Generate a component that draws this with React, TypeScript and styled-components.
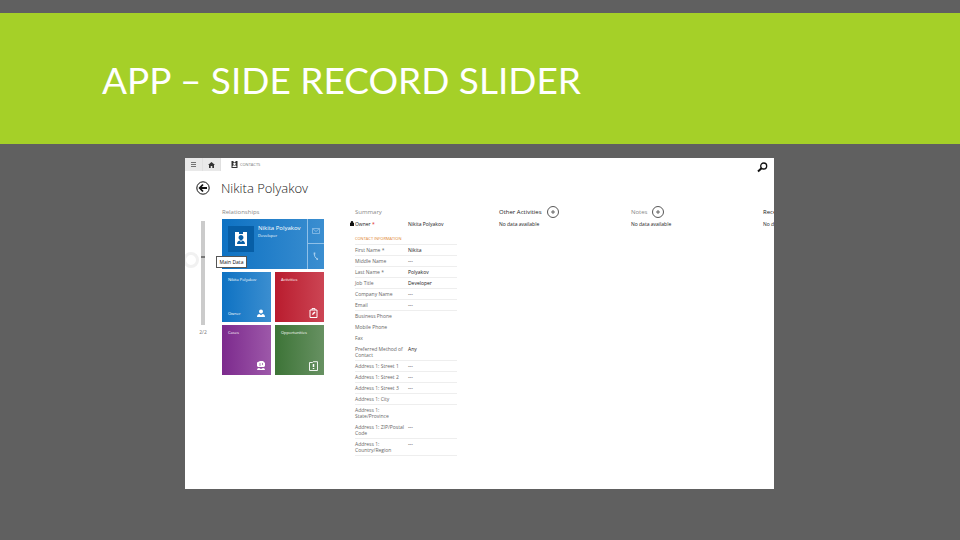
import React from "react";
import styled, { createGlobalStyle } from "styled-components";

const Global = createGlobalStyle`
  * { box-sizing: border-box; }
  html, body, #root { height: 100%; }
  body { margin: 0; background: #606060; font-family: "Open Sans", "Noto Sans", sans-serif; }
  h1, h2, h3, p, dl, dd { margin: 0; font-weight: 400; }
  button { border: 0; padding: 0; background: none; color: inherit; font: inherit; cursor: pointer; }
  svg { display: block; }
`;

const Slide = styled.main`
  min-height: 100%;
  padding-top: 13px;
  display: flex;
  flex-direction: column;
  gap: 14px;
`;

const Banner = styled.header`
  height: 131px;
  flex: none;
  padding: 2px 102px 0;
  display: flex;
  align-items: center;
  background: #a5d028;
  color: #fff;
`;

const Title = styled.h1`
  font: 400 37px/44px Lato, "Open Sans", sans-serif;
  white-space: nowrap;
`;

const Shot = styled.section`
  margin: 0 19.375% 51px 19.27%;
  flex: 1;
  background: #fff;
  color: #333;
  overflow: hidden;
`;

const NavBar = styled.nav`
  height: 13px;
  display: flex;
  align-items: center;
  justify-content: space-between;
`;

const NavGroup = styled.div`
  display: flex;
  align-items: center;
  height: 100%;
`;

const NavButton = styled.button`
  width: 18px;
  height: 13px;
  display: grid;
  place-items: center;
  background: #e9e9e9;
  border-right: 1px solid #e0e0e0;
`;

const Crumb = styled.a`
  margin-left: 10px;
  display: flex;
  align-items: center;
  gap: 2px;
  color: #777;
  font-size: 4px;
  line-height: 8px;
  text-decoration: none;

  svg { color: #333; }
`;

const SearchButton = styled.button`
  margin: 5px 6px 0 0;
`;

const RecordHead = styled.header`
  height: 35px;
  padding: 0 0 2px 11px;
  display: flex;
  align-items: center;
  gap: 11px;
`;

const RecordName = styled.h2`
  font: 300 13px/18px "Open Sans", sans-serif;
  color: #222;
`;

const Columns = styled.div`
  display: grid;
  grid-template-columns: 37px 127px 150px 132px 132px 80px;
  align-items: start;
`;

const Rail = styled.div`
  padding: 15px 1px 0 0;
  display: flex;
  flex-direction: column;
  align-items: center;
  gap: 3px;
  color: #777;
  font-size: 5px;
  line-height: 8px;
`;

const Track = styled.div`
  position: relative;
  width: 4px;
  height: 104px;
  background: #cbcbcb;
`;

const Mark = styled.span`
  position: absolute;
  top: 35px;
  left: 0;
  width: 4px;
  height: 2px;
  background: #777;
`;

const Knob = styled.button`
  position: absolute;
  top: 31px;
  right: 6px;
  width: 16px;
  height: 16px;
  border: 3px solid #f1f1f1;
  border-radius: 50%;
`;

const Heading = styled.h3<{ $strong?: boolean }>`
  font-size: 6px;
  line-height: 12px;
  color: ${(p) => (p.$strong ? "#222" : "#888")};
`;

const Tiles = styled.div`
  position: relative;
  margin-top: 1px;
  width: 102px;
  display: grid;
  grid-template-columns: 1fr 1fr;
  grid-template-rows: 50px 50px 50px;
  gap: 3px 4px;
`;

const Card = styled.article`
  grid-column: span 2;
  display: grid;
  grid-template-columns: 1fr 17px;
  background: linear-gradient(90deg, #0e72c3, #3b8ed0);
  color: #fff;
`;

const CardBody = styled.div`
  padding: 5px 6px;
  display: flex;
  gap: 4px;
`;

const Portrait = styled.div`
  width: 26px;
  height: 26px;
  margin-top: 2px;
  display: grid;
  place-items: center;
  background: #075ea6;
`;

const CardName = styled.h3`
  font-size: 6px;
  line-height: 8px;
  white-space: nowrap;
`;

const CardRole = styled.p`
  font-size: 4px;
  line-height: 8px;
`;

const CardActions = styled.div`
  display: grid;
  border-left: 1px solid #8fc0e8;

  button {
    display: grid;
    place-items: center;
  }
  button + button {
    border-top: 1px solid #8fc0e8;
  }
`;

const Tile = styled.button<{ $from: string; $to: string }>`
  padding: 4px 6px;
  display: grid;
  grid-template-columns: 1fr auto;
  align-content: space-between;
  align-items: end;
  background: linear-gradient(90deg, ${(p) => p.$from}, ${(p) => p.$to});
  color: #fff;
  font-size: 4px;
  line-height: 8px;
  text-align: left;

  span:first-child { grid-column: span 2; }
`;

const Tooltip = styled.div`
  position: absolute;
  top: 37px;
  left: -6px;
  height: 12px;
  width: 31px;
  display: grid;
  place-items: center;
  border: 1px solid #555;
  background: #fff;
  color: #111;
  font-size: 5px;
  line-height: 8px;
  white-space: nowrap;
`;

const Summary = styled.section`
  padding-left: 6px;
  width: 108px;
`;

const Fields = styled.dl`
  font-size: 5px;
`;

const Field = styled.div<{ $plain?: boolean }>`
  padding: 2px 0;
  display: grid;
  grid-template-columns: 53px 1fr;
  line-height: 6px;
  color: #666;
  border-bottom: 1px solid ${(p) => (p.$plain ? "transparent" : "#eee")};

  dd { color: #222; }
`;

const Owner = styled(Field)`
  margin-top: 1px;
  position: relative;
  color: #222;

  svg {
    position: absolute;
    left: -5px;
    top: 2px;
  }
`;

const Required = styled.span`
  color: #d22;
`;

const GroupTitle = styled.h3`
  margin-top: 4px;
  color: #e0822d;
  font-size: 4px;
  line-height: 10px;
  border-bottom: 1px solid #eee;
`;

const ListHead = styled.header`
  height: 12px;
  display: flex;
  align-items: center;
  gap: 5px;
  white-space: nowrap;
`;

const Empty = styled.p`
  margin-top: 3px;
  color: #222;
  font-size: 5px;
  line-height: 7px;
  white-space: nowrap;
`;

const ContactIcon = ({ size }: { size: number }) => (
  <svg width={size} height={size} viewBox="0 0 14 14" fill="currentColor">
    <path fillRule="evenodd" d="M1 0h4v2h4V0h4v14H1zM7 3a2.5 2.5 0 0 0-1.5 4.5L7 9l1.500-1.500A2.500 2.500 0 0 0 7 3M3 12h8c0-2-1-3-2.500-3.500L7 10 5.500 8.500C4 9 3 10 3 12" />
  </svg>
);

const AddIcon = () => (
  <svg width="12" height="12" viewBox="0 0 12 12" fill="none" stroke="#444">
    <circle cx="6" cy="6" r="5.500" strokeWidth=".9" />
    <path d="M6 4v4M4 6h4" strokeWidth=".8" />
  </svg>
);

const PersonIcon = () => (
  <svg width="8" height="9" viewBox="0 0 8 9" fill="currentColor">
    <circle cx="4" cy="2.500" r="2" />
    <path d="M0 8c0-2 1-3 2.500-3L4 6.200 5.500 5C7 5 8 6 8 8z" />
  </svg>
);

const CaseIcon = () => (
  <svg width="8" height="10" viewBox="0 0 8 10" fill="currentColor">
    <path d="M0 2q0-1 1-1l2-1h3l1 1 1 1v3l-1 1H1L0 5zM0 9q0-2 2-2l2 1 2-1q2 0 2 2z" />
    <path d="M3 2v3M5.500 2v2" stroke="#9350a0" strokeWidth=".7" />
  </svg>
);

const ActivityIcon = () => (
  <svg width="9" height="10" viewBox="0 0 9 10" fill="none" stroke="currentColor">
    <path d="M1 2h7v7.500H1zM3 2V.6h3V2" />
    <path d="m3 7 .6-2L5.500 3.500 6.500 4.500 4.500 6.500z" fill="currentColor" stroke="none" />
  </svg>
);

const OpportunityIcon = () => (
  <svg width="9" height="10" viewBox="0 0 9 10" fill="none" stroke="currentColor">
    <path d="M.5 1.500h3l.7-.8h4.300v8.800h-8z" strokeWidth=".9" />
    <path d="M4.500 3v3M4.500 7v1" strokeWidth="1.500" />
  </svg>
);

type Row = { label: string; value?: string; required?: boolean; plain?: boolean };

const rows: Row[] = [
  { label: "First Name", value: "Nikita", required: true },
  { label: "Middle Name", value: "---" },
  { label: "Last Name", value: "Polyakov", required: true },
  { label: "Job Title", value: "Developer" },
  { label: "Company Name", value: "---" },
  { label: "Email", value: "---" },
  { label: "Business Phone", plain: true },
  { label: "Mobile Phone", plain: true },
  { label: "Fax", plain: true },
  { label: "Preferred Method of Contact", value: "Any" },
  { label: "Address 1: Street 1", value: "---" },
  { label: "Address 1: Street 2", value: "---" },
  { label: "Address 1: Street 3", value: "---" },
  { label: "Address 1: City" },
  { label: "Address 1: State/Province", plain: true },
  { label: "Address 1: ZIP/Postal Code", value: "---" },
  { label: "Address 1: Country/Region", value: "---" },
];

export default function App() {
  return (
    <>
      <Global />
      <Slide>
        <Banner>
          <Title>APP – SIDE RECORD SLIDER</Title>
        </Banner>
        <Shot>
          <NavBar>
            <NavGroup>
              <NavButton aria-label="Menu">
                <svg width="5" height="5" viewBox="0 0 5 5" stroke="#555">
                  <path d="M0 .5h5M0 2.500h5M0 4.500h5" strokeWidth=".8" />
                </svg>
              </NavButton>
              <NavButton aria-label="Home">
                <svg width="7" height="6" viewBox="0 0 7 6" fill="#333">
                  <path d="M3.500 0 7 3H6v3H4.300V4H2.700v2H1V3H0z" />
                </svg>
              </NavButton>
              <Crumb href="#contacts">
                <ContactIcon size={7} />
                CONTACTS
              </Crumb>
            </NavGroup>
            <SearchButton aria-label="Search">
              <svg width="11" height="11" viewBox="0 0 11 11" fill="none" stroke="#111">
                <circle cx="6.700" cy="4" r="3" strokeWidth="1.300" />
                <path d="M4.500 6.200 1 9.500" strokeWidth="2" />
              </svg>
            </SearchButton>
          </NavBar>
          <RecordHead>
            <button aria-label="Back">
              <svg width="14" height="14" viewBox="0 0 14 14" fill="none" stroke="#111">
                <circle cx="7" cy="7" r="6.200" />
                <path d="M11 7H4M7 3.500 3.700 7 7 10.500" strokeWidth="1.800" />
              </svg>
            </button>
            <RecordName>Nikita Polyakov</RecordName>
          </RecordHead>
          <Columns>
            <Rail>
              <Track>
                <Mark />
                <Knob aria-label="Slide to record" />
              </Track>
              <span>2/2</span>
            </Rail>
            <section>
              <Heading>Relationships</Heading>
              <Tiles>
                <Card>
                  <CardBody>
                    <Portrait>
                      <ContactIcon size={14} />
                    </Portrait>
                    <div>
                      <CardName>Nikita Polyakov</CardName>
                      <CardRole>Developer</CardRole>
                    </div>
                  </CardBody>
                  <CardActions>
                    <button aria-label="Email">
                      <svg width="8" height="6" viewBox="0 0 8 6" fill="none" stroke="#8fc0e8">
                        <path d="M.5.500h7v5h-7zl3.500 3 3.500-3" strokeWidth=".8" />
                      </svg>
                    </button>
                    <button aria-label="Call">
                      <svg width="6" height="8" viewBox="0 0 6 8" fill="none" stroke="#a9d0ef">
                        <path d="M1.500 1C1 3.500 2 6 4.500 7" />
                        <path d="M1.500.5v2M3.500 7l1.500.3" strokeWidth="1.600" />
                      </svg>
                    </button>
                  </CardActions>
                </Card>
                <Tile $from="#0e72c3" $to="#3b8ed0">
                  <span>Nikita Polyakov</span>
                  <span>Owner</span>
                  <PersonIcon />
                </Tile>
                <Tile $from="#b91c2e" $to="#cc4554">
                  <span>Activities</span>
                  <span />
                  <ActivityIcon />
                </Tile>
                <Tile $from="#7c2a8d" $to="#9d58a9">
                  <span>Cases</span>
                  <span />
                  <CaseIcon />
                </Tile>
                <Tile $from="#3d7437" $to="#679162">
                  <span>Opportunities</span>
                  <span />
                  <OpportunityIcon />
                </Tile>
                <Tooltip role="tooltip">Main Data</Tooltip>
              </Tiles>
            </section>
            <Summary>
              <Heading>Summary</Heading>
              <Fields>
                <Owner $plain>
                  <dt>
                    <svg width="4" height="5" viewBox="0 0 4 5" fill="#111">
                      <path d="M0 2h.6C.6-.6 3.400-.6 3.400 2H4v3H0z" />
                    </svg>
                    Owner <Required>*</Required>
                  </dt>
                  <dd>Nikita Polyakov</dd>
                </Owner>
              </Fields>
              <GroupTitle>CONTACT INFORMATION</GroupTitle>
              <Fields>
                {rows.map((r) => (
                  <Field key={r.label} $plain={r.plain}>
                    <dt>
                      {r.label}
                      {r.required && " *"}
                    </dt>
                    <dd>{r.value}</dd>
                  </Field>
                ))}
              </Fields>
            </Summary>
            <section>
              <ListHead>
                <Heading $strong>Other Activities</Heading>
                <button aria-label="Add activity">
                  <AddIcon />
                </button>
              </ListHead>
              <Empty>No data available</Empty>
            </section>
            <section>
              <ListHead>
                <Heading>Notes</Heading>
                <button aria-label="Add note">
                  <AddIcon />
                </button>
              </ListHead>
              <Empty>No data available</Empty>
            </section>
            <section>
              <ListHead>
                <Heading $strong>Recent Cases</Heading>
              </ListHead>
              <Empty>No data available</Empty>
            </section>
          </Columns>
        </Shot>
      </Slide>
    </>
  );
}
